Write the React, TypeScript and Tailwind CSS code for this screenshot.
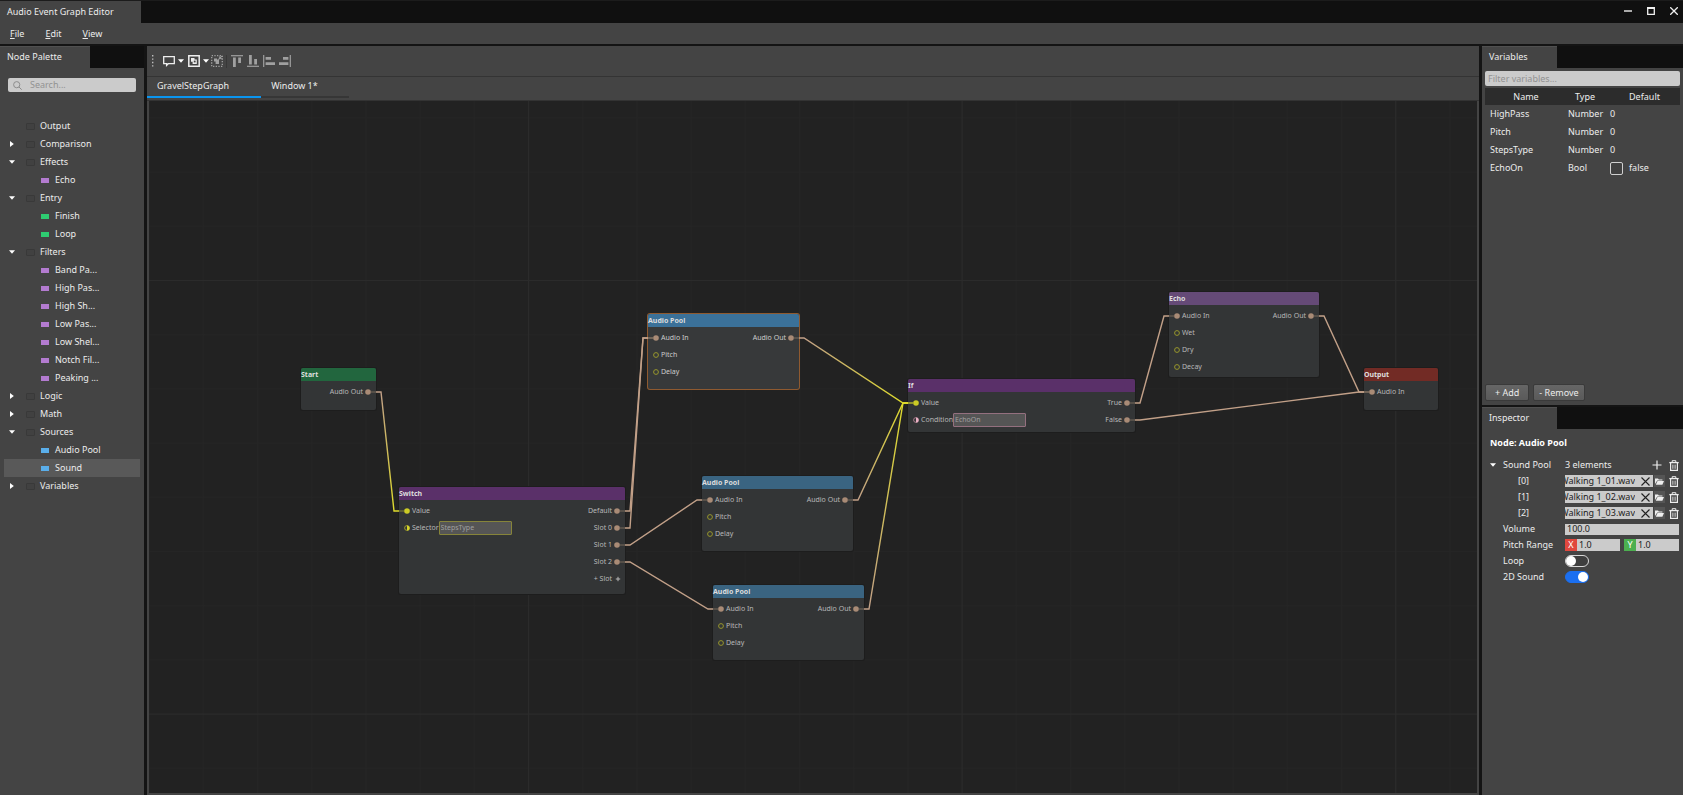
import { useState } from 'react'
import type { ReactNode } from 'react'
import clsx from 'clsx'

type Swatch = 'purple' | 'green' | 'blue'

interface TreeGroup {
  name: string
  open?: boolean
  leaf?: boolean
  children?: { name: string; color: Swatch }[]
}

const TREE: TreeGroup[] = [
  { name: 'Output', leaf: true },
  { name: 'Comparison' },
  { name: 'Effects', open: true, children: [{ name: 'Echo', color: 'purple' }] },
  {
    name: 'Entry',
    open: true,
    children: [
      { name: 'Finish', color: 'green' },
      { name: 'Loop', color: 'green' },
    ],
  },
  {
    name: 'Filters',
    open: true,
    children: [
      { name: 'Band Pa...', color: 'purple' },
      { name: 'High Pas...', color: 'purple' },
      { name: 'High Sh...', color: 'purple' },
      { name: 'Low Pas...', color: 'purple' },
      { name: 'Low Shel...', color: 'purple' },
      { name: 'Notch Fil...', color: 'purple' },
      { name: 'Peaking ...', color: 'purple' },
    ],
  },
  { name: 'Logic' },
  { name: 'Math' },
  {
    name: 'Sources',
    open: true,
    children: [
      { name: 'Audio Pool', color: 'blue' },
      { name: 'Sound', color: 'blue' },
    ],
  },
  { name: 'Variables' },
]

const SWATCH_CLASS: Record<Swatch, string> = {
  purple: 'bg-[#b37bd0]',
  green: 'bg-[#2ecc71]',
  blue: 'bg-[#5aaeea]',
}

const VARIABLES = [
  { name: 'HighPass', type: 'Number', value: '0' },
  { name: 'Pitch', type: 'Number', value: '0' },
  { name: 'StepsType', type: 'Number', value: '0' },
  { name: 'EchoOn', type: 'Bool', value: 'false' },
]

type PortKind = 'audio' | 'value' | 'number' | 'numberHalf' | 'boolHalf' | 'plus'

interface PortDef {
  label: string
  kind: PortKind
  field?: string
}

interface NodeDef {
  id: string
  title: string
  // position on the canvas
  box: string
  header: string
  selected?: boolean
  inputs: PortDef[]
  outputs: PortDef[]
}

const POOL_INPUTS: PortDef[] = [
  { label: 'Audio In', kind: 'audio' },
  { label: 'Pitch', kind: 'number' },
  { label: 'Delay', kind: 'number' },
]
const AUDIO_OUT: PortDef[] = [{ label: 'Audio Out', kind: 'audio' }]

const NODES: NodeDef[] = [
  {
    id: 'start', title: 'Start', box: 'left-[152px] top-[267px] w-[75px] h-[42px]', header: 'bg-[#22663e]',
    inputs: [], outputs: AUDIO_OUT,
  },
  {
    id: 'switch', title: 'Switch', box: 'left-[250px] top-[386px] w-[226px] h-[107px]', header: 'bg-[#5a3069]',
    inputs: [
      { label: 'Value', kind: 'value' },
      { label: 'Selector', kind: 'numberHalf', field: 'StepsType' },
    ],
    outputs: [
      { label: 'Default', kind: 'audio' },
      { label: 'Slot 0', kind: 'audio' },
      { label: 'Slot 1', kind: 'audio' },
      { label: 'Slot 2', kind: 'audio' },
      { label: '+ Slot', kind: 'plus' },
    ],
  },
  {
    id: 'pool1', title: 'Audio Pool', box: 'left-[499px] top-[213px] w-[151px] h-[75px]', header: 'bg-[#3b7199]',
    selected: true, inputs: POOL_INPUTS, outputs: AUDIO_OUT,
  },
  {
    id: 'pool2', title: 'Audio Pool', box: 'left-[553px] top-[375px] w-[151px] h-[75px]', header: 'bg-[#3a6481]',
    inputs: POOL_INPUTS, outputs: AUDIO_OUT,
  },
  {
    id: 'pool3', title: 'Audio Pool', box: 'left-[564px] top-[484px] w-[151px] h-[75px]', header: 'bg-[#3a6481]',
    inputs: POOL_INPUTS, outputs: AUDIO_OUT,
  },
  {
    id: 'if', title: 'If', box: 'left-[759px] top-[278px] w-[227px] h-[53px]', header: 'bg-[#5a3069]',
    inputs: [
      { label: 'Value', kind: 'value' },
      { label: 'Condition', kind: 'boolHalf', field: 'EchoOn' },
    ],
    outputs: [
      { label: 'True', kind: 'audio' },
      { label: 'False', kind: 'audio' },
    ],
  },
  {
    id: 'echo', title: 'Echo', box: 'left-[1020px] top-[191px] w-[150px] h-[85px]', header: 'bg-[#654a77]',
    inputs: [
      { label: 'Audio In', kind: 'audio' },
      { label: 'Wet', kind: 'number' },
      { label: 'Dry', kind: 'number' },
      { label: 'Decay', kind: 'number' },
    ],
    outputs: AUDIO_OUT,
  },
  {
    id: 'output', title: 'Output', box: 'left-[1215px] top-[267px] w-[74px] h-[42px]', header: 'bg-[#722b25]',
    inputs: [{ label: 'Audio In', kind: 'audio' }], outputs: [],
  },
]

const TAN = '#c2a088'
const YELLOW = '#dedb2c'

// [from x, from y, to x, to y, ends in a value port]
const WIRES: [number, number, number, number, boolean][] = [
  [219, 291, 258, 410, true],
  [468, 410, 507, 237, false],
  [468, 427, 507, 237, false],
  [468, 444, 561, 399, false],
  [468, 461, 572, 508, false],
  [642, 237, 767, 302, true],
  [696, 399, 767, 302, true],
  [707, 508, 767, 302, true],
  [978, 302, 1028, 215, false],
  [978, 319, 1223, 291, false],
  [1162, 215, 1223, 291, false],
]

function Wire({ wire, index }: { wire: [number, number, number, number, boolean]; index: number }) {
  const [x1, y1, x2, y2, toValue] = wire
  const end = toValue ? YELLOW : TAN
  const id = `wire-${index}`
  return (
    <g fill="none" strokeWidth="1.4">
      <linearGradient id={id} gradientUnits="userSpaceOnUse" x1={x1 + 13} y1={y1} x2={x2 - 13} y2={y2}>
        <stop offset="0" stopColor={TAN} />
        <stop offset="1" stopColor={end} />
      </linearGradient>
      <path d={`M${x1 + 8} ${y1}H${x1 + 13}L${x2 - 13} ${y2}H${x2 - 8}`} stroke={`url(#${id})`} />
      <path d={`M${x1 + 3} ${y1}H${x1 + 8}`} stroke={TAN} opacity="0.35" />
      <path d={`M${x2 - 8} ${y2}H${x2 - 3}`} stroke={end} opacity="0.35" />
    </g>
  )
}

function Port({ kind }: { kind: PortKind }) {
  return (
    <svg className="size-[6px] shrink-0 overflow-visible" viewBox="0 0 6 6" aria-hidden="true">
      {kind === 'audio' && <circle cx="3" cy="3" r="2.8" fill="#a98b76" />}
      {kind === 'value' && <circle cx="3" cy="3" r="2.8" fill="#cccb25" />}
      {kind === 'number' && <circle cx="3" cy="3" r="2.4" fill="none" stroke="#97962c" />}
      {kind === 'numberHalf' && (
        <>
          <circle cx="3" cy="3" r="2.4" fill="none" stroke="#b5b42a" strokeWidth="0.8" />
          <path d="M3 0.4a2.6 2.6 0 0 1 0 5.2z" fill="#d6d52a" />
        </>
      )}
      {kind === 'boolHalf' && (
        <>
          <circle cx="3" cy="3" r="2.4" fill="none" stroke="#c08a9e" strokeWidth="0.8" />
          <path d="M3 0.4a2.6 2.6 0 0 1 0 5.2z" fill="#eab0c4" />
        </>
      )}
      {kind === 'plus' && <path d="M4 0.8v4.4M1.8 3h4.4" stroke="#b8b8b8" />}
    </svg>
  )
}

function GraphNode({ node }: { node: NodeDef }) {
  return (
    <section
      className={clsx(
        'absolute rounded-[2px] text-[7px] leading-[9px]',
        node.box,
        node.selected ? 'bg-[#37393a] text-[#cccccc] ring-1 ring-[#8f5a30]' : 'bg-[#333536] text-[#b8b8b8] ring-1 ring-[#1d1d1d]',
      )}
    >
      <h3 className={clsx('flex h-[13px] items-center rounded-t-[2px] pb-px font-bold text-[#dddddd]', node.header)}>
        {node.title}
      </h3>
      <div className="flex justify-between px-[5px] pt-[2px]">
        <div>
          {node.inputs.map((port) => (
            <div key={port.label} className="flex h-[17px] items-center gap-[2px]">
              <Port kind={port.kind} />
              {port.field ? (
                <label className="flex items-center">
                  {port.label}
                  <input
                    defaultValue={port.field}
                    className={clsx(
                      'h-[14px] w-[73px] rounded-[1px] border bg-[#555555] px-px text-[#a0a0a0] outline-none',
                      port.kind === 'boolHalf' ? 'border-[#94707f]' : 'border-[#86843a]',
                    )}
                  />
                </label>
              ) : (
                <span>{port.label}</span>
              )}
            </div>
          ))}
        </div>
        <div>
          {node.outputs.map((port) => (
            <div key={port.label} className="flex h-[17px] items-center justify-end gap-[2px]">
              <span>{port.label}</span>
              <Port kind={port.kind} />
            </div>
          ))}
        </div>
      </div>
    </section>
  )
}

function Caret({ open, className }: { open: boolean; className?: string }) {
  return (
    <svg className={clsx('size-[6px] shrink-0', className)} viewBox="0 0 6 6" fill="#ffffff" aria-hidden="true">
      {open ? <path d="M0 1.3h6L3 4.7z" /> : <path d="M1 0v6L4.8 3z" />}
    </svg>
  )
}

/** Panel header: a single tab, the rest of the strip stays dark. */
function PanelTab({ title, width }: { title: string; width: string }) {
  return (
    <div className="flex h-[22px] shrink-0 bg-[#101010]">
      <h2 className={clsx('flex items-center border-t border-[#505050] bg-[#444444] pb-[2px] pl-[7px]', width)}>{title}</h2>
    </div>
  )
}

function NodePalette() {
  const [openGroups, setOpenGroups] = useState(() => TREE.filter((g) => g.open).map((g) => g.name))
  const [selected, setSelected] = useState('Sound')
  const toggle = (name: string) =>
    setOpenGroups((prev) => (prev.includes(name) ? prev.filter((n) => n !== name) : [...prev, name]))

  return (
    <aside className="flex w-36 shrink-0 flex-col bg-[#444444]">
      <PanelTab title="Node Palette" width="w-[90px]" />
      <label className="mx-2 mt-[10px] flex h-[14px] items-center gap-2 rounded-[2px] bg-[#cbcbcb] px-[5px]">
        <svg className="size-[9px] shrink-0" viewBox="0 0 9 9" fill="none" stroke="#8d8d8d" aria-hidden="true">
          <circle cx="3.7" cy="3.7" r="3.1" />
          <path d="M6 6l2.7 2.7" />
        </svg>
        <input
          type="search"
          aria-label="Search"
          placeholder="Search..."
          className="w-full min-w-0 text-[#222222] outline-none placeholder:text-[#929292]"
        />
      </label>
      <ul className="mt-[25px] overflow-hidden px-1">
        {TREE.map((group) => {
          const open = openGroups.includes(group.name)
          return (
            <li key={group.name}>
              <button
                type="button"
                onClick={() => toggle(group.name)}
                className="flex h-[18px] w-full items-center pl-[5px] text-left"
              >
                {group.leaf ? <span className="size-[6px]" /> : <Caret open={open} />}
                <span className="mr-[5px] ml-[11px] h-[7px] w-[9px] rounded-[1px] border border-[#393939] bg-[#414141]" />
                {group.name}
              </button>
              {open && group.children && (
                <ul>
                  {group.children.map((item) => (
                    <li key={item.name}>
                      <button
                        type="button"
                        onClick={() => setSelected(item.name)}
                        className={clsx(
                          'flex h-[18px] w-full items-center gap-[6px] pl-[37px] text-left',
                          selected === item.name && 'bg-[#595959]',
                        )}
                      >
                        <span className={clsx('h-[5px] w-[8px]', SWATCH_CLASS[item.color])} />
                        {item.name}
                      </button>
                    </li>
                  ))}
                </ul>
              )}
            </li>
          )
        })}
      </ul>
    </aside>
  )
}

function ToolButton({ label, children }: { label: string; children: ReactNode }) {
  return (
    <button type="button" aria-label={label} className="flex items-center gap-[3px]">
      {children}
    </button>
  )
}

function Icon({ children, className }: { children: ReactNode; className?: string }) {
  return (
    <svg className={clsx('size-[12px] shrink-0', className)} viewBox="0 0 12 12" fill="none" aria-hidden="true">
      {children}
    </svg>
  )
}

function Toolbar() {
  return (
    <div className="flex h-[31px] shrink-0 items-center border-b border-[#343434] bg-[#444444] pl-[5px]" role="toolbar">
      <svg className="mr-[9px] h-[12px] w-[2px]" viewBox="0 0 2 12" fill="#bdbdbd" aria-hidden="true">
        <path d="M0 0h1.4v1.4H0zM0 3.4h1.4v1.4H0zM0 6.8h1.4v1.4H0zM0 10.2h1.4v1.4H0z" />
      </svg>
      <ToolButton label="Add comment">
        <Icon>
          <path d="M0.7 1.7h10.6v7H5.2L3.6 10.4V8.7H0.7z" stroke="#eeeeee" strokeWidth="1.3" />
        </Icon>
        <Caret open />
      </ToolButton>
      <span className="w-[4px]" />
      <ToolButton label="Group selection">
        <Icon>
          <path d="M0.8 0.8h10.4v10.4H0.8z" stroke="#eeeeee" strokeWidth="1.5" />
          <path d="M3 3h3.5v1.4H8.8V9H4.6V6.8H3z" fill="#eeeeee" />
          <path d="M5.8 5.6h1.8v1.8H5.8z" fill="#444444" />
        </Icon>
        <Caret open />
      </ToolButton>
      <span className="w-[2px]" />
      <ToolButton label="Ungroup">
        <Icon>
          <path d="M0.7 0.7h10.6v10.6H0.7z" stroke="#a0a0a0" strokeWidth="1.3" strokeDasharray="1.3 1.35" />
          <path d="M3 3.4h3v1.2h2V9H4.6V6.6H3z" fill="#a0a0a0" />
          <path d="M7.4 4.6L10.8 1.2M8 1.6l2.6 2.6" stroke="#a0a0a0" strokeWidth="1.1" />
        </Icon>
      </ToolButton>
      <span className="mr-1 ml-[3px] h-[13px] w-px bg-[#383838]" />
      <div className="flex gap-[4px]">
        <ToolButton label="Align top">
          <Icon>
            <path d="M0 0.7h12" stroke="#a0a0a0" strokeWidth="1.2" />
            <path d="M2 2.6h2.8v9.4H2zM7.2 2.6H10v5.4H7.2z" fill="#a0a0a0" />
          </Icon>
        </ToolButton>
        <ToolButton label="Align bottom">
          <Icon>
            <path d="M0 11.3h12" stroke="#a0a0a0" strokeWidth="1.2" />
            <path d="M2 0h2.8v9.4H2zM7.2 4H10v5.4H7.2z" fill="#a0a0a0" />
          </Icon>
        </ToolButton>
        <ToolButton label="Align left">
          <Icon>
            <path d="M0.7 0v12" stroke="#a0a0a0" strokeWidth="1.2" />
            <path d="M2.6 2h5.4v2.8H2.6zM2.6 7.2H12V10H2.6z" fill="#a0a0a0" />
          </Icon>
        </ToolButton>
        <ToolButton label="Align right">
          <Icon>
            <path d="M11.3 0v12" stroke="#a0a0a0" strokeWidth="1.2" />
            <path d="M4 2h5.4v2.8H4zM0 7.2h9.4V10H0z" fill="#a0a0a0" />
          </Icon>
        </ToolButton>
      </div>
    </div>
  )
}

function GraphCanvas() {
  return (
    <div className="relative min-h-0 flex-1 overflow-hidden border-2 border-t-0 border-[#444444] bg-[#222222]">
      <svg className="absolute inset-0 size-full" aria-hidden="true">
        <defs>
          <pattern id="minor" x="379" y="179" width="54.2" height="54.2" patternUnits="userSpaceOnUse">
            <path d="M0 0.5H54.2M0.5 0V54.2" stroke="#252525" />
          </pattern>
          <pattern id="major" x="379" y="179" width="433.6" height="433.6" patternUnits="userSpaceOnUse">
            <path d="M0 0.5H433.6M0.5 0V433.6" stroke="#2b2b2b" />
          </pattern>
        </defs>
        <rect width="100%" height="100%" fill="url(#minor)" />
        <rect width="100%" height="100%" fill="url(#major)" />
      </svg>
      {NODES.map((node) => (
        <GraphNode key={node.id} node={node} />
      ))}
      <svg className="pointer-events-none absolute inset-0 size-full" aria-hidden="true">
        {WIRES.map((wire, i) => (
          <Wire key={i} wire={wire} index={i} />
        ))}
      </svg>
    </div>
  )
}

function GraphEditor() {
  const [active, setActive] = useState('GravelStepGraph')
  return (
    <main className="flex min-w-0 flex-1 flex-col bg-[#444444]">
      <Toolbar />
      <div className="flex h-[21px] shrink-0" role="tablist">
        {['GravelStepGraph', 'Window 1*'].map((name) => (
          <button
            key={name}
            type="button"
            role="tab"
            aria-selected={active === name}
            onClick={() => setActive(name)}
            className={clsx(
              'border-b-2 pb-px pl-[10px] text-left first:pr-8 last:pr-[31px]',
              active === name ? 'border-[#0a95f0]' : 'border-[#363636]',
            )}
          >
            {name}
          </button>
        ))}
      </div>
      <div className="h-[3px] shrink-0 border-b border-[#333333]" />
      <GraphCanvas />
    </main>
  )
}

function VariablesPanel() {
  return (
    <section className="flex min-h-0 shrink grow-[359] basis-0 flex-col bg-[#444444]">
      <PanelTab title="Variables" width="w-[75px]" />
      <input
        aria-label="Filter variables"
        placeholder="Filter variables..."
        className="mx-[3px] mt-[3px] h-[15px] shrink-0 rounded-[2px] bg-[#cbcbcb] px-[3px] text-[#222222] outline-none placeholder:text-[#929292]"
      />
      <table className="mx-[3px] mt-[2px] table-fixed">
        <thead>
          <tr className="h-[17px] bg-[#2c2c2c]">
            <th className="w-[78px] pl-1 font-normal">Name</th>
            <th className="w-[44px] font-normal">Type</th>
            <th className="pl-[2px] font-normal">Default</th>
          </tr>
        </thead>
        <tbody>
          {VARIABLES.map((v) => (
            <tr key={v.name} className="h-[18px]">
              <td className="pl-[5px]">{v.name}</td>
              <td className="pl-[5px]">{v.type}</td>
              <td className="pl-[3px]">
                {v.type === 'Bool' ? (
                  <label className="flex items-center gap-[6px]">
                    <input
                      type="checkbox"
                      className="size-[13px] appearance-none rounded-[2px] border border-[#d0d0d0] bg-[#414141] checked:bg-[#1b6ff0]"
                    />
                    {v.value}
                  </label>
                ) : (
                  v.value
                )}
              </td>
            </tr>
          ))}
        </tbody>
      </table>
      <div className="mt-auto mb-1 flex gap-1 px-[3px]">
        {['+ Add', '- Remove'].map((label) => (
          <button
            key={label}
            type="button"
            className="h-[17px] rounded-[2px] border border-[#3a3a3a] bg-linear-to-b from-[#666666] to-[#5a5a5a] px-[5px] first:px-[9px]"
          >
            {label}
          </button>
        ))}
      </div>
    </section>
  )
}

function Trash() {
  return (
    <button type="button" aria-label="Delete">
      <svg className="h-[11px] w-[10px]" viewBox="0 0 10 11" fill="none" stroke="#eeeeee" aria-hidden="true">
        <path d="M0.3 2.6h9.4" strokeWidth="1.3" />
        <path d="M3.2 2.2V0.7h3.6v1.5" />
        <path d="M1.6 3v7.3h6.8V3" strokeWidth="1.2" />
        <path d="M3.9 4.6v4.2M6.1 4.6v4.2" strokeWidth="0.9" />
      </svg>
    </button>
  )
}

function InspectorRow({ label, htmlFor, indent, children }: { label: string; htmlFor?: string; indent?: boolean; children: ReactNode }) {
  return (
    <div className="flex h-4 items-center pr-1">
      <label htmlFor={htmlFor} className={clsx('w-[83px] shrink-0', indent ? 'pl-9' : 'pl-[21px]')}>
        {label}
      </label>
      {children}
    </div>
  )
}

const FIELD = 'w-full min-w-0 bg-[#cbcbcb] px-[2px] text-[#222222] outline-none'

function Toggle({ id, on }: { id: string; on?: boolean }) {
  return (
    <input
      id={id}
      type="checkbox"
      defaultChecked={on}
      className="relative h-3 w-6 appearance-none rounded-full border border-[#d8d8d8] bg-[#3e3e3e] before:absolute before:top-0 before:left-0 before:size-[10px] before:rounded-full before:bg-white checked:border-[#1b6ff0] checked:bg-[#1b6ff0] checked:before:left-3"
    />
  )
}

function Inspector() {
  return (
    <section className="flex min-h-0 shrink grow-[388] basis-0 flex-col bg-[#444444]">
      <PanelTab title="Inspector" width="w-[75px]" />
      <h3 className="pt-2 pb-2 pl-2 leading-3 font-bold text-white">Node: Audio Pool</h3>
      <div className="flex h-4 items-center pr-1">
        <button type="button" className="flex w-[83px] items-center gap-[7px] pl-2">
          <Caret open />
          Sound Pool
        </button>
        <span className="flex-1">3 elements</span>
        <button type="button" aria-label="Add element" className="mr-[7px]">
          <svg className="size-[10px]" viewBox="0 0 10 10" stroke="#eeeeee" strokeWidth="1.2" aria-hidden="true">
            <path d="M5 0.5v9M0.5 5h9" />
          </svg>
        </button>
        <Trash />
      </div>
      {['01', '02', '03'].map((n, i) => (
        <InspectorRow key={n} label={`[${i}]`} htmlFor={`clip-${n}`} indent>
          <span className="flex min-w-0 flex-1 items-center bg-[#cbcbcb] pr-[3px]">
            <input
              id={`clip-${n}`}
              dir="rtl"
              defaultValue={`Walking 1_${n}.wav`}
              className="h-3 w-full min-w-0 text-[#222222] outline-none"
            />
            <button type="button" aria-label="Clear" className="ml-[6px]">
              <svg className="size-[9px]" viewBox="0 0 9 9" stroke="#222222" strokeWidth="1.1" aria-hidden="true">
                <path d="M0.5 0.5l8 8M8.5 0.5l-8 8" />
              </svg>
            </button>
          </span>
          <button type="button" aria-label="Browse" className="mr-1 ml-px flex h-3 w-[11px] items-center justify-center bg-[#555555]">
            <svg className="h-[7px] w-[9px]" viewBox="0 0 9 7" fill="#eeeeee" aria-hidden="true">
              <path d="M0 6V0.5h3l0.8 0.9h3.6v1.1H2.2z" />
              <path d="M2.5 3H9L7.4 6.8H0.8z" />
            </svg>
          </button>
          <Trash />
        </InspectorRow>
      ))}
      <InspectorRow label="Volume" htmlFor="volume">
        <input id="volume" defaultValue="100.0" className={clsx(FIELD, 'h-[11px]')} />
      </InspectorRow>
      <InspectorRow label="Pitch Range">
        <div className="flex gap-1">
          <label className="flex h-3 items-center">
            <span className="h-3 w-3 shrink-0 bg-[#e0483e] text-center text-white">X</span>
            <input defaultValue="1.0" className={clsx(FIELD, 'h-3')} />
          </label>
          <label className="flex h-3 items-center">
            <span className="h-3 w-3 shrink-0 bg-[#4caf50] text-center text-white">Y</span>
            <input defaultValue="1.0" className={clsx(FIELD, 'h-3')} />
          </label>
        </div>
      </InspectorRow>
      <InspectorRow label="Loop" htmlFor="loop">
        <Toggle id="loop" />
      </InspectorRow>
      <InspectorRow label="2D Sound" htmlFor="sound-2d">
        <Toggle id="sound-2d" on />
      </InspectorRow>
    </section>
  )
}

function TitleBar() {
  return (
    <header className="flex h-[23px] shrink-0 items-stretch justify-between border-t border-[#1c1c1c] bg-[#101010]">
      <h1 className="flex w-[141px] items-center bg-[#444444] pl-[7px]">Audio Event Graph Editor</h1>
      <div className="flex items-center gap-[15px] pr-[5px] pb-[2px]">
        <button type="button" aria-label="Minimize">
          <svg className="size-[8px]" viewBox="0 0 8 8" stroke="#f0f0f0" strokeWidth="1.4" aria-hidden="true">
            <path d="M0 4h8" />
          </svg>
        </button>
        <button type="button" aria-label="Maximize">
          <svg className="size-[8px]" viewBox="0 0 8 8" fill="none" stroke="#f0f0f0" strokeWidth="1.3" aria-hidden="true">
            <path d="M0.7 0.7h6.6v6.6H0.7z" />
            <path d="M0 1h8" strokeWidth="2" />
          </svg>
        </button>
        <button type="button" aria-label="Close">
          <svg className="size-[8px]" viewBox="0 0 8 8" stroke="#f0f0f0" strokeWidth="1.3" aria-hidden="true">
            <path d="M0.2 0.2l7.6 7.6M7.8 0.2L0.2 7.8" />
          </svg>
        </button>
      </div>
    </header>
  )
}

export default function App() {
  return (
    <div className="flex h-screen flex-col bg-[#141414] font-['Noto_Sans',sans-serif] text-[9px] leading-3 text-[#ececec]">
      <TitleBar />
      <nav className="flex h-[21px] shrink-0 items-center gap-[21px] bg-[#444444] pl-[10px]">
        {['File', 'Edit', 'View'].map((item) => (
          <button key={item} type="button">
            <span className="underline">{item[0]}</span>
            {item.slice(1)}
          </button>
        ))}
      </nav>
      <div className="mt-[2px] flex min-h-0 flex-1 gap-[3px]">
        <NodePalette />
        <GraphEditor />
        <div className="flex w-[201px] shrink-0 flex-col gap-[2px]">
          <VariablesPanel />
          <Inspector />
        </div>
      </div>
    </div>
  )
}
